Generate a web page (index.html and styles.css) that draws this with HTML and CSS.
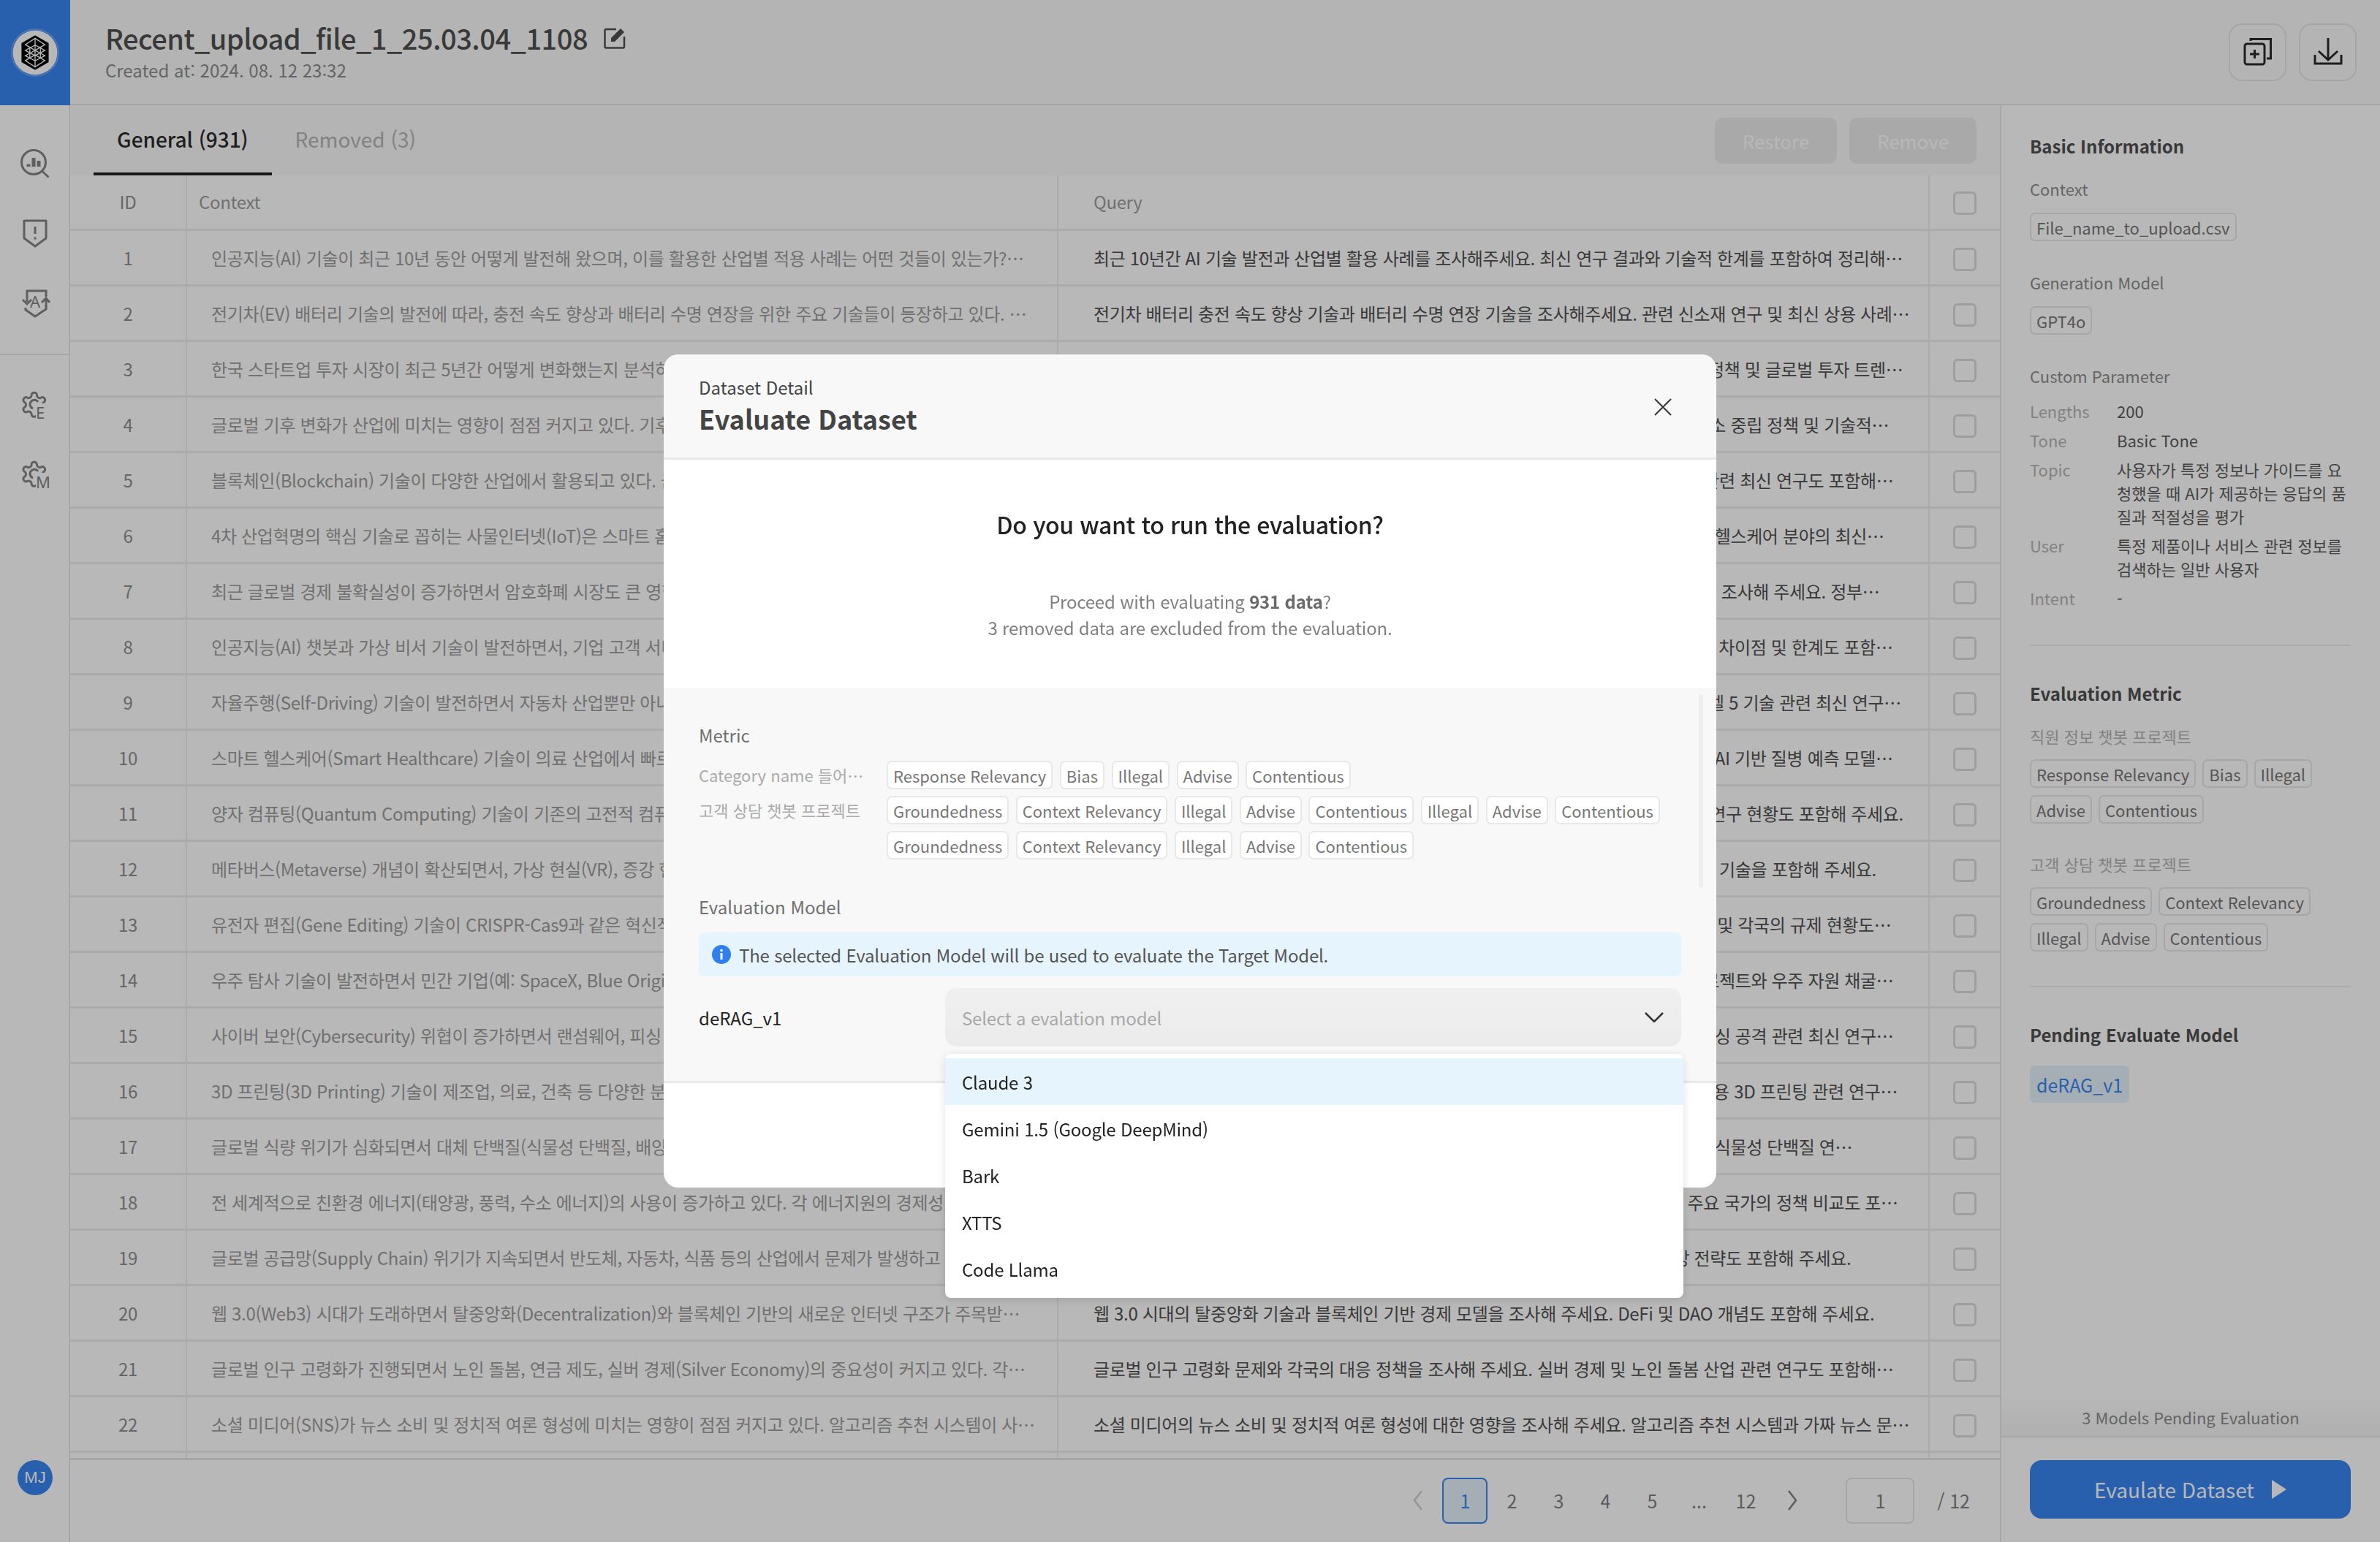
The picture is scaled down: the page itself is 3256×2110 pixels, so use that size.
FILE: index.html
```html
<!Doctype html>
<html lang="ko">
<head>
    <meta charset="utf-8">
    <title>Evaluate Dataset</title>
    <link rel="stylesheet" href="styles.css">
</head>
<body>
    <div class="app">
        <aside class="sidebar">
            <div class="logo-box">
                <svg class="logo" viewBox="0 0 64 64">
                    <circle cx="32" cy="32" r="31" fill="none" stroke="#ffffff" stroke-opacity="0.25" stroke-width="2"/>
                    <circle cx="32" cy="32" r="29.5" fill="#ffffff"/>
                    <path d="M32 9 50 19.500V44.500L32 55 14 44.500V19.500Z" fill="#000000"/>
                    <g fill="none" stroke="#ffffff" stroke-width="1.300">
                        <path d="M32 13 45 21.500 32 29 19 21.500Z"/>
                        <path d="M32 22 45 29 32 36 19 29Z"/>
                        <path d="M32 29 45 36 32 43 19 36Z"/>
                        <path d="M32 35 45 42.500 32 51 19 42.500Z"/>
                        <path d="M32 13V51M25 25V40M39 25V40"/>
                    </g>
                </svg>
            </div>
            <nav class="nav-group">
                <svg class="nav-icon" viewBox="0 0 40 40">
                    <circle cx="18" cy="18" r="16.500"/>
                    <path d="M29.500 30 38.500 38.500"/>
                    <path class="thick" d="M11 20.500V24M18 12V24M25 16V24"/>
                </svg>
                <svg class="nav-icon" viewBox="0 0 40 40">
                    <path d="M5 2H35V26L20 37 5 26Z" stroke-linejoin="round"/>
                    <path d="M20 10V20M20 24.500V27.500"/>
                </svg>
                <svg class="nav-icon" viewBox="0 0 40 40">
                    <path d="M9 17V2H35V10M35 22V27L20 37 7 28V25"/>
                    <path d="M9 19V20M3 14 9 20 15 14M35 12V24M29 18 35 12 40 18"/>
                    <text x="20" y="25" class="nav-letter" text-anchor="middle">A</text>
                </svg>
            </nav>
            <nav class="nav-group nav-second">
                <svg class="nav-icon" viewBox="0 0 40 40">
                    <g transform="translate(-1 -1) scale(1.650)">
                        <path d="M12.220 2h-.44a2 2 0 0 0-2 2v.18a2 2 0 0 1-1 1.730l-.43.25a2 2 0 0 1-2 0l-.15-.08a2 2 0 0 0-2.730.73l-.22.38a2 2 0 0 0 .73 2.730l.15.1a2 2 0 0 1 1 1.720v.51a2 2 0 0 1-1 1.740l-.15.09a2 2 0 0 0-.73 2.730l.22.38a2 2 0 0 0 2.730.73l.15-.08a2 2 0 0 1 2 0l.43.25a2 2 0 0 1 1 1.730V20a2 2 0 0 0 2 2h.44a2 2 0 0 0 2-2v-.18a2 2 0 0 1 1-1.730l.43-.25a2 2 0 0 1 2 0l.15.08a2 2 0 0 0 2.730-.73l.22-.39a2 2 0 0 0-.73-2.730l-.15-.08a2 2 0 0 1-1-1.740v-.5a2 2 0 0 1 1-1.740l.15-.09a2 2 0 0 0 .73-2.730l-.22-.38a2 2 0 0 0-2.730-.73l-.15.08a2 2 0 0 1-2 0l-.43-.25a2 2 0 0 1-1-1.730V4a2 2 0 0 0-2-2z" stroke-width="1.800"/>
                    </g>
                    <rect class="cut" x="21" y="17" width="19" height="23"/>
                    <path d="M24 15A6 6 0 1 0 17 24"/>
                    <text x="21" y="38" class="nav-letter">E</text>
                </svg>
                <svg class="nav-icon" viewBox="0 0 40 40">
                    <g transform="translate(-1 -1) scale(1.650)">
                        <path d="M12.220 2h-.44a2 2 0 0 0-2 2v.18a2 2 0 0 1-1 1.730l-.43.25a2 2 0 0 1-2 0l-.15-.08a2 2 0 0 0-2.730.73l-.22.38a2 2 0 0 0 .73 2.730l.15.1a2 2 0 0 1 1 1.720v.51a2 2 0 0 1-1 1.740l-.15.09a2 2 0 0 0-.73 2.730l.22.38a2 2 0 0 0 2.730.73l.15-.08a2 2 0 0 1 2 0l.43.25a2 2 0 0 1 1 1.730V20a2 2 0 0 0 2 2h.44a2 2 0 0 0 2-2v-.18a2 2 0 0 1 1-1.730l.43-.25a2 2 0 0 1 2 0l.15.08a2 2 0 0 0 2.730-.73l.22-.39a2 2 0 0 0-.73-2.730l-.15-.08a2 2 0 0 1-1-1.740v-.5a2 2 0 0 1 1-1.740l.15-.09a2 2 0 0 0 .73-2.730l-.22-.38a2 2 0 0 0-2.730-.73l-.15.08a2 2 0 0 1-2 0l-.43-.25a2 2 0 0 1-1-1.730V4a2 2 0 0 0-2-2z" stroke-width="1.800"/>
                    </g>
                    <rect class="cut" x="21" y="17" width="19" height="23"/>
                    <path d="M24 15A6 6 0 1 0 17 24"/>
                    <text x="21" y="38" class="nav-letter">M</text>
                </svg>
            </nav>
            <div class="avatar">MJ</div>
        </aside>

        <div class="content">
            <header class="topbar">
                <div class="title-box">
                    <div class="title-line">
                        <h1>Recent_upload_file_1_25.03.04_1108</h1>
                        <svg class="edit-icon" viewBox="0 0 30 30">
                            <path d="M17 3H3A1.500 1.500 0 0 0 1.500 4.500V27A1.500 1.500 0 0 0 3 28.500H26.500A1.500 1.500 0 0 0 28 27V13" fill="none" stroke="currentColor" stroke-width="2.500"/>
                            <path d="M10 20V15L23 2 28 7 15 20Z" fill="currentColor"/>
                        </svg>
                    </div>
                    <div class="created">Created at: 2024. 08. 12 23:32</div>
                </div>
                <div class="top-actions">
                    <button class="icon-btn">
                        <svg viewBox="0 0 40 40" width="40" height="40">
                            <path d="M10 5V2.500H37.500V29H32" fill="none" stroke="currentColor" stroke-width="3"/>
                            <rect x="2" y="9" width="27" height="28" rx="3" fill="none" stroke="currentColor" stroke-width="3"/>
                            <path d="M9 23H22M15.500 17V29" stroke="currentColor" stroke-width="3"/>
                        </svg>
                    </button>
                    <button class="icon-btn">
                        <svg viewBox="0 0 40 40" width="40" height="40">
                            <path d="M20 1V31M7 19 20 31 33 19M2 24V36H38V24" fill="none" stroke="currentColor" stroke-width="3"/>
                        </svg>
                    </button>
                </div>
            </header>

            <div class="workspace">
                <main class="data-area">
                    <div class="tabbar">
                        <div class="tab active">General (931)</div>
                        <div class="tab">Removed (3)</div>
                        <div class="tab-actions">
                            <button class="dim-btn btn-restore">Restore</button>
                            <button class="dim-btn btn-remove">Remove</button>
                        </div>
                    </div>
                    <div class="table-wrap">
                        <table class="data-table">
                            <colgroup>
                                <col class="col-id"><col class="col-text"><col class="col-text"><col class="col-check">
                            </colgroup>
                            <thead>
                                <tr><th class="cell-id">ID</th><th class="head-context">Context</th><th class="head-query">Query</th><th><span class="check"></span></th></tr>
                            </thead>
                            <tbody>
                                <tr><td class="cell-id">1</td><td class="cell-context">인공지능(AI) 기술이 최근 10년 동안 어떻게 발전해 왔으며, 이를 활용한 산업별 적용 사례는 어떤 것들이 있는가?…</td><td class="cell-query">최근 10년간 AI 기술 발전과 산업별 활용 사례를 조사해주세요. 최신 연구 결과와 기술적 한계를 포함하여 정리해…</td><td><span class="check"></span></td></tr>
                                <tr><td class="cell-id">2</td><td class="cell-context">전기차(EV) 배터리 기술의 발전에 따라, 충전 속도 향상과 배터리 수명 연장을 위한 주요 기술들이 등장하고 있다. …</td><td class="cell-query">전기차 배터리 충전 속도 향상 기술과 배터리 수명 연장 기술을 조사해주세요. 관련 신소재 연구 및 최신 상용 사례…</td><td><span class="check"></span></td></tr>
                                <tr><td class="cell-id">3</td><td class="cell-context">한국 스타트업 투자 시장이 최근 5년간 어떻게 변화했는지 분석하고, 주요 투자 분야를 살펴보자.</td><td class="cell-query">한국 스타트업 투자 시장의 최근 5년간의 변화를 조사해 주세요. 주요 투자 분야와 정부 정책 및 글로벌 투자 트렌…</td><td><span class="check"></span></td></tr>
                                <tr><td class="cell-id">4</td><td class="cell-context">글로벌 기후 변화가 산업에 미치는 영향이 점점 커지고 있다. 기후 변화에 대응하는 기업들의 전략을 살펴보자.</td><td class="cell-query">글로벌 기후 변화가 주요 산업에 미치는 영향을 조사해 주세요. 기업들의 대응 전략과 탄소 중립 정책 및 기술적…</td><td><span class="check"></span></td></tr>
                                <tr><td class="cell-id">5</td><td class="cell-context">블록체인(Blockchain) 기술이 다양한 산업에서 활용되고 있다. 금융과 물류 분야의 사례를 살펴보자.</td><td class="cell-query">블록체인 기술의 산업별 활용 사례를 조사해 주세요. 금융, 물류, 의료 분야를 중심으로 관련 최신 연구도 포함해…</td><td><span class="check"></span></td></tr>
                                <tr><td class="cell-id">6</td><td class="cell-context">4차 산업혁명의 핵심 기술로 꼽히는 사물인터넷(IoT)은 스마트 홈과 공장, 의료 분야로 확산되고 있다.</td><td class="cell-query">최근 국내외 사물인터넷 기술의 활용 사례들을 조사해 주세요. 스마트 홈과 스마트 공장, 헬스케어 분야의 최신…</td><td><span class="check"></span></td></tr>
                                <tr><td class="cell-id">7</td><td class="cell-context">최근 글로벌 경제 불확실성이 증가하면서 암호화폐 시장도 큰 영향을 받고 있다. 각국의 규제도 강화되고 있다.</td><td class="cell-query">최근 국내외 글로벌 경제 불확실성이 암호화폐 시장에 미치는 영향과 각국의 규제 동향을 조사해 주세요. 정부…</td><td><span class="check"></span></td></tr>
                                <tr><td class="cell-id">8</td><td class="cell-context">인공지능(AI) 챗봇과 가상 비서 기술이 발전하면서, 기업 고객 서비스 방식이 빠르게 변화하고 있다.</td><td class="cell-query">AI 챗봇과 가상 비서 기술의 최신 발전들을 조사해 주세요. 기업 고객 서비스 적용 사례와 차이점 및 한계도 포함…</td><td><span class="check"></span></td></tr>
                                <tr><td class="cell-id">9</td><td class="cell-context">자율주행(Self-Driving) 기술이 발전하면서 자동차 산업뿐만 아니라 물류와 교통 분야도 변화하고 있다.</td><td class="cell-query">국내외 자율주행 기술의 발전 현황들을 조사해 주세요. 자동차 산업 변화와 레벨 4 및 레벨 5 기술 관련 최신 연구…</td><td><span class="check"></span></td></tr>
                                <tr><td class="cell-id">10</td><td class="cell-context">스마트 헬스케어(Smart Healthcare) 기술이 의료 산업에서 빠르게 확산되고 있다.</td><td class="cell-query">최근 국내외 스마트 헬스케어 기술의 의료 산업 적용 사례를 조사해 주세요. 원격 진료와 AI 기반 질병 예측 모델…</td><td><span class="check"></span></td></tr>
                                <tr><td class="cell-id">11</td><td class="cell-context">양자 컴퓨팅(Quantum Computing) 기술이 기존의 고전적 컴퓨팅 방식을 넘어서고 있다.</td><td class="cell-query">양자 컴퓨팅 기술의 최신 동향을 조사해 주세요. 고전적 컴퓨팅과의 차이와 주요 기업의 연구 현황도 포함해 주세요.</td><td><span class="check"></span></td></tr>
                                <tr><td class="cell-id">12</td><td class="cell-context">메타버스(Metaverse) 개념이 확산되면서, 가상 현실(VR), 증강 현실(AR) 기술도 주목받고 있다.</td><td class="cell-query">메타버스 개념의 확산과 산업별 활용 사례를 조사해 주세요. 가상 현실 및 증강 현실 관련 기술을 포함해 주세요.</td><td><span class="check"></span></td></tr>
                                <tr><td class="cell-id">13</td><td class="cell-context">유전자 편집(Gene Editing) 기술이 CRISPR-Cas9과 같은 혁신적 방법으로 발전하고 있다.</td><td class="cell-query">국내외 유전자 편집 기술의 최신 연구 동향들을 조사해 주세요. CRISPR-Cas9 활용 사례 및 각국의 규제 현황도…</td><td><span class="check"></span></td></tr>
                                <tr><td class="cell-id">14</td><td class="cell-context">우주 탐사 기술이 발전하면서 민간 기업(예: SpaceX, Blue Origin)의 참여가 늘고 있다.</td><td class="cell-query">국내외 민간 기업들의 우주 탐사 기술 발전을 조사해 주세요. 재사용 로켓, 화성 탐사 프로젝트와 우주 자원 채굴…</td><td><span class="check"></span></td></tr>
                                <tr><td class="cell-id">15</td><td class="cell-context">사이버 보안(Cybersecurity) 위협이 증가하면서 랜섬웨어, 피싱 공격이 늘어나고 있다.</td><td class="cell-query">국내외 사이버 보안 위협의 최신 동향을 조사해 주세요. 기업 대응 전략과 랜섬웨어 및 피싱 공격 관련 최신 연구…</td><td><span class="check"></span></td></tr>
                                <tr><td class="cell-id">16</td><td class="cell-context">3D 프린팅(3D Printing) 기술이 제조업, 의료, 건축 등 다양한 분야에서 활용되고 있다.</td><td class="cell-query">3D 프린팅 기술의 주요 산업별 활용 사례들을 조사해 주세요. 제조업, 의료, 건축 분야 활용 3D 프린팅 관련 연구…</td><td><span class="check"></span></td></tr>
                                <tr><td class="cell-id">17</td><td class="cell-context">글로벌 식량 위기가 심화되면서 대체 단백질(식물성 단백질, 배양육)이 주목받고 있다.</td><td class="cell-query">글로벌 식량 위기와 대체 단백질 기술의 발전들을 조사해 주세요. 시장 전망과 배양육 및 식물성 단백질 연…</td><td><span class="check"></span></td></tr>
                                <tr><td class="cell-id">18</td><td class="cell-context">전 세계적으로 친환경 에너지(태양광, 풍력, 수소 에너지)의 사용이 증가하고 있다. 각 에너지원의 경제성, 효율성을 비교해 보자.</td><td class="cell-query">주요 친환경 에너지 기술의 최신 동향을 조사해 주세요. 태양광, 풍력, 수소 에너지와 주요 국가의 정책 비교도 포…</td><td><span class="check"></span></td></tr>
                                <tr><td class="cell-id">19</td><td class="cell-context">글로벌 공급망(Supply Chain) 위기가 지속되면서 반도체, 자동차, 식품 등의 산업에서 문제가 발생하고 있다.</td><td class="cell-query">글로벌 공급망 위기의 원인과 산업별 영향을 조사해 주세요. 기업 대응 사례와 공급망 전략도 포함해 주세요.</td><td><span class="check"></span></td></tr>
                                <tr><td class="cell-id">20</td><td class="cell-context">웹 3.0(Web3) 시대가 도래하면서 탈중앙화(Decentralization)와 블록체인 기반의 새로운 인터넷 구조가 주목받…</td><td class="cell-query">웹 3.0 시대의 탈중앙화 기술과 블록체인 기반 경제 모델을 조사해 주세요. DeFi 및 DAO 개념도 포함해 주세요.</td><td><span class="check"></span></td></tr>
                                <tr><td class="cell-id">21</td><td class="cell-context">글로벌 인구 고령화가 진행되면서 노인 돌봄, 연금 제도, 실버 경제(Silver Economy)의 중요성이 커지고 있다. 각…</td><td class="cell-query">글로벌 인구 고령화 문제와 각국의 대응 정책을 조사해 주세요. 실버 경제 및 노인 돌봄 산업 관련 연구도 포함해…</td><td><span class="check"></span></td></tr>
                                <tr><td class="cell-id">22</td><td class="cell-context">소셜 미디어(SNS)가 뉴스 소비 및 정치적 여론 형성에 미치는 영향이 점점 커지고 있다. 알고리즘 추천 시스템이 사…</td><td class="cell-query">소셜 미디어의 뉴스 소비 및 정치적 여론 형성에 대한 영향을 조사해 주세요. 알고리즘 추천 시스템과 가짜 뉴스 문…</td><td><span class="check"></span></td></tr>
                                <tr class="row-sliver"><td></td><td></td><td></td><td></td></tr>
                            </tbody>
                        </table>
                    </div>
                    <div class="pager">
                        <svg class="pager-arrow faded" viewBox="0 0 16 32"><path d="M13 3 3 16 13 29"/></svg>
                        <span class="page current">1</span>
                        <span class="page">2</span>
                        <span class="page">3</span>
                        <span class="page">4</span>
                        <span class="page">5</span>
                        <span class="page">...</span>
                        <span class="page">12</span>
                        <svg class="pager-arrow" viewBox="0 0 16 32"><path d="M3 3 13 16 3 29"/></svg>
                        <span class="page-input">1</span>
                        <span class="page-total">/ 12</span>
                    </div>
                </main>

                <aside class="info-panel">
                    <div class="info-scroll">
                        <h2 class="info-title first">Basic Information</h2>
                        <div class="info-label">Context</div>
                        <div class="tag-row"><span class="tag">File_name_to_upload.csv</span></div>
                        <div class="info-label spaced">Generation Model</div>
                        <div class="tag-row"><span class="tag">GPT4o</span></div>
                        <div class="info-label spaced">Custom Parameter</div>
                        <dl class="params">
                            <dt>Lengths</dt><dd>200</dd>
                            <dt>Tone</dt><dd>Basic Tone</dd>
                            <dt>Topic</dt><dd>사용자가 특정 정보나 가이드를 요청했을 때 AI가 제공하는 응답의 품질과 적절성을 평가</dd>
                            <dt>User</dt><dd>특정 제품이나 서비스 관련 정보를 검색하는 일반 사용자</dd>
                            <dt>Intent</dt><dd>-</dd>
                        </dl>
                        <hr class="info-rule">
                        <h2 class="info-title">Evaluation Metric</h2>
                        <div class="group-label">직원 정보 챗봇 프로젝트</div>
                        <div class="tag-row">
                            <span class="tag">Response Relevancy</span><span class="tag">Bias</span><span class="tag">Illegal</span><span class="tag">Advise</span><span class="tag">Contentious</span>
                        </div>
                        <div class="group-label second">고객 상담 챗봇 프로젝트</div>
                        <div class="tag-row">
                            <span class="tag">Groundedness</span><span class="tag">Context Relevancy</span><span class="tag">Illegal</span><span class="tag">Advise</span><span class="tag">Contentious</span>
                        </div>
                        <hr class="info-rule low">
                        <h2 class="info-title">Pending Evaluate Model</h2>
                        <span class="model-chip">deRAG_v1</span>
                    </div>
                    <div class="info-status">3 Models Pending Evaluation</div>
                    <div class="info-footer">
                        <button class="run-btn">Evaulate Dataset<svg viewBox="0 0 20 26" width="20" height="26"><path d="M0 0 20 13 0 26Z" fill="currentColor"/></svg></button>
                    </div>
                </aside>
            </div>
        </div>
    </div>

    <div class="overlay">
        <section class="modal">
            <header class="modal-head">
                <div>
                    <div class="modal-sub">Dataset Detail</div>
                    <h2 class="modal-title">Evaluate Dataset</h2>
                </div>
                <svg class="modal-close" viewBox="0 0 24 24"><path d="M1 1 23 23M23 1 1 23"/></svg>
            </header>
            <div class="modal-intro">
                <h3>Do you want to run the evaluation?</h3>
                <p>Proceed with evaluating <b>931 data</b>?<br>3 removed data are excluded from the evaluation.</p>
            </div>
            <div class="modal-form">
                <div class="scroll-thumb"></div>
                <div class="form-label">Metric</div>
                <div class="metric-row">
                    <div class="metric-name">Category name 들어가는 자리입니다</div>
                    <div class="tag-row">
                        <span class="tag">Response Relevancy</span><span class="tag">Bias</span><span class="tag">Illegal</span><span class="tag">Advise</span><span class="tag">Contentious</span>
                    </div>
                </div>
                <div class="metric-row">
                    <div class="metric-name">고객 상담 챗봇 프로젝트</div>
                    <div class="tag-row">
                        <span class="tag">Groundedness</span><span class="tag">Context Relevancy</span><span class="tag">Illegal</span><span class="tag">Advise</span><span class="tag">Contentious</span><span class="tag">Illegal</span><span class="tag">Advise</span><span class="tag">Contentious</span><span class="tag">Groundedness</span><span class="tag">Context Relevancy</span><span class="tag">Illegal</span><span class="tag">Advise</span><span class="tag">Contentious</span>
                    </div>
                </div>
                <div class="form-label model-label">Evaluation Model</div>
                <div class="notice">
                    <svg viewBox="0 0 26 26" width="26" height="26">
                        <circle cx="13" cy="13" r="13" fill="#2f80ed"/>
                        <circle cx="13" cy="7.500" r="1.800" fill="#ffffff"/>
                        <rect x="11.500" y="11" width="3" height="9" fill="#ffffff"/>
                    </svg>
                    The selected Evaluation Model will be used to evaluate the Target Model.
                </div>
                <div class="select-row">
                    <div class="select-name">deRAG_v1</div>
                    <div class="select-box">
                        <span class="placeholder">Select a evalation model</span>
                        <svg class="chevron" viewBox="0 0 26 14"><path d="M1 1 13 13 25 1"/></svg>
                        <ul class="menu">
                            <li class="on">Claude 3</li>
                            <li>Gemini 1.5 (Google DeepMind)</li>
                            <li>Bark</li>
                            <li>XTTS</li>
                            <li>Code Llama</li>
                        </ul>
                    </div>
                </div>
            </div>
            <footer class="modal-foot"></footer>
        </section>
    </div>
</body>
</html>
```

FILE: styles.css
```css
* {
    box-sizing: border-box;
}

html,
body {
    margin: 0;
    height: 100%;
    font-family: "Noto Sans CJK KR", "Noto Sans", sans-serif;
    background-color: #ffffff;
    color: #222222;
}

h1, h2, h3, p, ul, dl, dd {
    margin: 0;
    padding: 0;
}

button {
    font-family: inherit;
    border: 0;
    padding: 0;
}

.app {
    display: flex;
    width: 3256px;
    height: 2110px;
    overflow: hidden;
}

/* 왼쪽 메뉴 */
.sidebar {
    width: 96px;
    flex: none;
    display: flex;
    flex-direction: column;
    align-items: center;
    border-right: 2px solid #e8e8e8;
}
.logo-box {
    width: 96px;
    height: 144px;
    align-self: flex-start;
    flex: none;
    display: flex;
    align-items: center;
    justify-content: center;
    background-color: #3885f2;
}
.logo {
    width: 66px;
    height: 66px;
}
.nav-group {
    width: 100%;
    display: flex;
    flex-direction: column;
    align-items: center;
    gap: 56px;
    padding: 60px 0 48px 2px;
    border-bottom: 2px solid #e8e8e8;
}
.nav-second {
    gap: 55px;
    border-bottom: 0;
    padding-top: 49px;
}
.nav-icon {
    width: 40px;
    height: 40px;
    overflow: visible;
    fill: none;
    stroke: #848484;
    stroke-width: 3;
}
.nav-icon .thick {
    stroke-width: 5;
}
.nav-icon .cut {
    fill: #ffffff;
    stroke: none;
}
.nav-letter {
    font-size: 22px;
    fill: #848484;
    stroke: none;
    font-family: "Noto Sans", sans-serif;
}
.avatar {
    width: 48px;
    height: 48px;
    margin-top: auto;
    margin-left: 2px;
    margin-bottom: 64px;
    border-radius: 50%;
    background-color: #3885f2;
    color: #ffffff;
    font-family: "Liberation Sans", sans-serif;
    font-size: 22px;
    display: flex;
    align-items: center;
    justify-content: center;
}

.content {
    flex: 1;
    min-width: 0;
    display: flex;
    flex-direction: column;
}

/* 상단 */
.topbar {
    height: 144px;
    flex: none;
    display: flex;
    align-items: center;
    justify-content: space-between;
    padding: 0 32px 0 48px;
    background-color: #fafafa;
    border-bottom: 2px solid #e8e8e8;
}
.title-box {
    margin-top: -6px;
}
.title-line {
    display: flex;
    align-items: center;
    gap: 22px;
}
h1 {
    font-size: 38px;
    font-weight: 500;
    line-height: 54px;
    letter-spacing: -0.5px;
    color: #505050;
}
.edit-icon {
    width: 30px;
    height: 30px;
    color: #505050;
}
.created {
    margin-top: 1px;
    font-size: 24px;
    line-height: 32px;
    color: #8c8c8c;
}
.top-actions {
    display: flex;
    gap: 17px;
}
.icon-btn {
    width: 79px;
    height: 79px;
    border: 2px solid #e6e6e6;
    border-radius: 18px;
    background-color: #fafafa;
    color: #2a2a2a;
    display: flex;
    align-items: center;
    justify-content: center;
}

.workspace {
    flex: 1;
    min-height: 0;
    display: flex;
}
.data-area {
    flex: 1;
    min-width: 0;
    display: flex;
    flex-direction: column;
}

/* 탭 */
.tabbar {
    height: 96px;
    flex: none;
    display: flex;
    align-items: center;
    padding: 0 32px;
    background-color: #fafafa;
}
.tab {
    height: 96px;
    padding: 0 32px;
    display: flex;
    align-items: center;
    font-size: 28px;
    color: #b4b4b4;
    border-bottom: 4px solid transparent;
}
.tab.active {
    color: #2a2a2a;
    font-weight: 500;
    border-bottom-color: #222222;
}
.tab-actions {
    margin-left: auto;
    display: flex;
    gap: 17px;
}
.dim-btn {
    height: 63px;
    border-radius: 10px;
    background-color: #ebebeb;
    color: #ffffff;
    font-size: 26px;
}
.btn-restore {
    width: 167px;
}
.btn-remove {
    width: 174px;
}

/* 표 */
.table-wrap {
    height: 1758px;
    flex: none;
    overflow: hidden;
    border-bottom: 3px solid #e8e8e8;
}
.data-table {
    width: 100%;
    table-layout: fixed;
    border-collapse: collapse;
}
.col-id {
    width: 159px;
}
.col-check {
    width: 97px;
}
.data-table th,
.data-table td {
    height: 76px;
    padding: 0;
    border-bottom: 3px solid #eeeeee;
    border-right: 2px solid #eeeeee;
    font-size: 24px;
    font-weight: 400;
    letter-spacing: -0.35px;
    text-align: left;
    white-space: nowrap;
    overflow: hidden;
    text-overflow: ellipsis;
    color: #9c9c9c;
}
.data-table th:last-child,
.data-table td:last-child {
    border-right: 0;
    text-align: center;
}
.data-table th {
    height: 74px;
    padding-bottom: 2px;
}
.data-table .cell-id {
    text-align: center;
    color: #8e8e8e;
}
.head-context {
    padding-left: 16px !important;
}
.head-query {
    padding-left: 48px !important;
}
.data-table .cell-context {
    padding: 0 24px 0 33px;
}
.data-table .cell-query {
    padding: 0 14px 0 48px;
    color: #505050;
}
.row-sliver td {
    height: 11px;
    border-bottom: 0;
}
.check {
    display: inline-block;
    width: 32px;
    height: 32px;
    vertical-align: middle;
    border: 3px solid #dcdcdc;
    border-radius: 6px;
    background-color: #ffffff;
}

/* 페이지 */
.pager {
    flex: 1;
    display: flex;
    align-items: center;
    justify-content: flex-end;
    padding-right: 41px;
    padding-bottom: 2px;
    gap: 2px;
    font-size: 25px;
    color: #808080;
}
.page {
    width: 62px;
    height: 63px;
    display: flex;
    align-items: center;
    justify-content: center;
    border: 2px solid transparent;
    border-radius: 8px;
}
.page.current {
    border-color: #3885f2;
    background-color: #e6f1fb;
    color: #3885f2;
}
.pager-arrow {
    width: 62px;
    height: 32px;
    fill: none;
    stroke: #808080;
    stroke-width: 2.500;
}
.pager-arrow.faded {
    stroke: #cfcfcf;
}
.page-input {
    width: 94px;
    height: 63px;
    margin-left: 40px;
    display: flex;
    align-items: center;
    justify-content: center;
    border: 2px solid #e6e6e6;
    border-radius: 8px;
}
.page-total {
    margin-left: 29px;
}

/* 오른쪽 정보 */
.info-panel {
    width: 520px;
    flex: none;
    display: flex;
    flex-direction: column;
    border-left: 2px solid #e8e8e8;
}
.info-scroll {
    flex: 1;
    padding: 38px 40px 0 39px;
}
.info-title {
    font-size: 24px;
    line-height: 36px;
    font-weight: 700;
    color: #505050;
}
.info-label {
    margin-top: 24px;
    margin-bottom: 17px;
    font-size: 22px;
    line-height: 32px;
    color: #8c8c8c;
}
.info-label.spaced {
    margin-top: 40px;
}
.tag-row {
    display: flex;
    flex-wrap: wrap;
    gap: 10px 9px;
}
.tag {
    height: 39px;
    padding: 0 7px;
    display: inline-flex;
    align-items: center;
    border: 2px solid #e8e8e8;
    border-radius: 7px;
    font-size: 22px;
    color: #777777;
    background-color: #ffffff;
}
.params {
    margin-top: -1px;
    display: grid;
    grid-template-columns: 119px 1fr;
    gap: 8px 0;
    font-size: 22px;
    line-height: 32px;
}
.params dt {
    color: #b4b4b4;
}
.params dd {
    color: #5c5c5c;
}
.info-rule {
    margin: 48px 0 47px;
    height: 2px;
    border: 0;
    background-color: #eeeeee;
}
.info-rule.low {
    margin-top: 47px;
}
.group-label {
    margin-top: 24px;
    margin-bottom: 16px;
    font-size: 22px;
    line-height: 32px;
    color: #b4b4b4;
}
.group-label.second {
    margin-top: 39px;
}
.model-chip {
    margin-top: 24px;
    height: 51px;
    padding: 0 9px;
    display: inline-flex;
    align-items: center;
    border-radius: 7px;
    background-color: #e6f1fb;
    color: #3885f2;
    font-size: 25px;
}
.info-status {
    height: 60px;
    flex: none;
    padding-top: 6px;
    display: flex;
    align-items: center;
    justify-content: center;
    font-size: 22px;
    color: #8c8c8c;
    background: linear-gradient(to bottom, #ffffff, #f4f4f4);
    border-bottom: 2px solid #e8e8e8;
}
.info-footer {
    flex: none;
    padding: 31px 40px 32px 39px;
}
.run-btn {
    width: 100%;
    height: 80px;
    border-radius: 16px;
    display: flex;
    align-items: center;
    justify-content: center;
    gap: 24px;
    background-color: #3885f2;
    color: #ffffff;
    font-size: 28px;
}

/* 모달 */
.overlay {
    position: fixed;
    top: 0;
    left: 0;
    width: 100%;
    height: 100%;
    display: flex;
    align-items: center;
    justify-content: center;
    background-color: rgba(0, 0, 0, 0.28);
}
.modal {
    width: 1440px;
    height: 1140px;
    display: flex;
    flex-direction: column;
    border-radius: 20px;
    background-color: #ffffff;
}
.modal-head {
    height: 144px;
    flex: none;
    display: flex;
    align-items: center;
    justify-content: space-between;
    padding: 0 61px 2px 48px;
    border-radius: 20px 20px 0 0;
    background-color: #f8f8f8;
    border-bottom: 3px solid #e8e8e8;
}
.modal-sub {
    font-size: 24px;
    line-height: 34px;
    color: #444444;
}
.modal-title {
    font-size: 36px;
    line-height: 50px;
    font-weight: 700;
    color: #444444;
}
.modal-close {
    width: 24px;
    height: 24px;
    margin-top: 4px;
    fill: none;
    stroke: #333333;
    stroke-width: 2;
}
.modal-intro {
    height: 312px;
    flex: none;
    padding-top: 64px;
    text-align: center;
}
.modal-intro h3 {
    font-size: 32px;
    line-height: 48px;
    font-weight: 500;
    letter-spacing: -0.4px;
    color: #222222;
}
.modal-intro p {
    margin-top: 64px;
    font-size: 24px;
    line-height: 36px;
    letter-spacing: -0.2px;
    color: #808080;
}
.modal-intro b {
    font-weight: 700;
    color: #6a6a6a;
}
.modal-form {
    position: relative;
    flex: 1;
    min-height: 0;
    padding: 48px 48px 0;
    background-color: #f8f8f8;
    border-bottom: 3px solid #e8e8e8;
}
.scroll-thumb {
    position: absolute;
    top: 9px;
    right: 18px;
    width: 6px;
    height: 265px;
    border-radius: 3px;
    background-color: #eeeeee;
}
.form-label {
    font-size: 24px;
    line-height: 34px;
    color: #707070;
    margin-bottom: 18px;
}
.model-label {
    margin-top: 48px;
}
.metric-row {
    display: grid;
    grid-template-columns: 257px 1fr;
    margin-bottom: 9px;
}
.metric-row .tag-row {
    gap: 9px 9.500px;
}
.metric-name {
    width: 230px;
    font-size: 22px;
    line-height: 39px;
    color: #aaaaaa;
    white-space: nowrap;
    overflow: hidden;
    text-overflow: ellipsis;
}
.notice {
    height: 60px;
    display: flex;
    align-items: center;
    gap: 11px;
    padding-left: 18px;
    border-radius: 8px;
    background-color: #e6f4fe;
    font-size: 24px;
    letter-spacing: -0.2px;
    color: #555555;
}
.select-row {
    margin-top: 16px;
    display: flex;
    align-items: center;
}
.select-name {
    width: 337px;
    font-size: 24px;
    color: #222222;
}
.select-box {
    position: relative;
    flex: 1;
    height: 80px;
    display: flex;
    align-items: center;
    justify-content: space-between;
    padding: 0 24px 0 23px;
    border-radius: 16px;
    background: linear-gradient(to bottom, #f0f0f0, #ebebeb);
}
.placeholder {
    font-size: 24px;
    letter-spacing: -0.2px;
    color: #a8a8a8;
}
.chevron {
    width: 26px;
    height: 14px;
    fill: none;
    stroke: #333333;
    stroke-width: 2.500;
}
.menu {
    position: absolute;
    top: 90px;
    left: 0;
    right: -3px;
    padding: 6px 0 8px;
    list-style: none;
    border-radius: 8px;
    background-color: #ffffff;
    box-shadow: 0 2px 12px rgba(0, 0, 0, 0.12);
}
.menu li {
    height: 64px;
    padding-left: 23px;
    display: flex;
    align-items: center;
    font-size: 24px;
    letter-spacing: -0.2px;
    color: #222222;
}
.menu li.on {
    background-color: #e6f4fe;
}
.modal-foot {
    height: 143px;
    flex: none;
    border-radius: 0 0 20px 20px;
}
```
